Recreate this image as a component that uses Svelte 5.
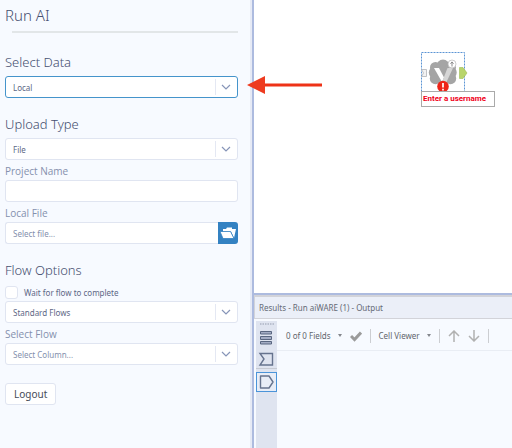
<script>
  let source = $state('Local');
  let uploadType = $state('File');
  let projectName = $state('');
  let file = $state('');
  let wait = $state(false);
  let flowKind = $state('Standard Flows');
  let column = $state('');
</script>

{#snippet chevron()}
  <svg class="chevron" viewBox="0 0 22 20" aria-hidden="true">
    <path d="M.5 2v16" stroke="#e4e8f3" />
    <path d="M7 8l4 4 4-4" fill="none" stroke="#8795b8" stroke-width="1.2" />
  </svg>
{/snippet}

<div class="app">
  <aside class="config">
    <h1>Run AI</h1>
    <hr />

    <section>
      <h2 id="source-title">Select Data</h2>
      <div class="field">
        <select class="active" aria-labelledby="source-title" bind:value={source}>
          <option>Local</option>
        </select>
        {@render chevron()}
      </div>
    </section>

    <section>
      <h2 id="upload-title">Upload Type</h2>
      <div class="field">
        <select aria-labelledby="upload-title" bind:value={uploadType}>
          <option>File</option>
        </select>
        {@render chevron()}
      </div>
      <label class="caption" for="project">Project Name</label>
      <div class="field"><input id="project" type="text" bind:value={projectName} /></div>
      <label class="caption" for="file">Local File</label>
      <div class="field picker">
        <input id="file" type="text" placeholder="Select file..." bind:value={file} />
        <button class="browse" aria-label="Browse files">
          <svg viewBox="0 0 20 22" aria-hidden="true">
            <path d="M5 9.500V7h3l1-1.500h5V7h4l-2 9-3-6.500z" fill="#fff" />
            <path d="M2 9.500h10.500l3.500 7H5z" fill="#fff" stroke="#3482c2" stroke-width=".8" />
          </svg>
        </button>
      </div>
    </section>

    <section>
      <h2 id="flow-title">Flow Options</h2>
      <label class="check"><input type="checkbox" bind:checked={wait} />Wait for flow to complete</label>
      <div class="field">
        <select aria-labelledby="flow-title" bind:value={flowKind}>
          <option>Standard Flows</option>
        </select>
        {@render chevron()}
      </div>
      <label class="caption" for="column">Select Flow</label>
      <div class="field">
        <select id="column" class="empty" bind:value={column}>
          <option value="">Select Column...</option>
        </select>
        {@render chevron()}
      </div>
    </section>

    <button class="logout">Logout</button>
  </aside>

  <main>
    <div class="canvas">
      <svg class="arrow" viewBox="0 0 76 18" aria-hidden="true">
        <path d="M17 9h58" stroke="#ee3217" stroke-width="3" />
        <path d="M0 9L18 0v18z" fill="#ee3b20" />
      </svg>
      <div class="node">
        <svg viewBox="0 0 48 42" aria-hidden="true">
          <rect x=".5" y="1.5" width="43" height="41" fill="none" stroke="#5b94d4" stroke-dasharray="2 1" />
          <path d="M.5 18.500h5v7h-5l2-3.500z" fill="#f2f2f2" stroke="#b0b3b8" stroke-width=".8" />
          <path d="M38.500 16.500h3.500l4 5.500-4 5.500h-3.500z" fill="#b8d56b" stroke="#9dbb55" stroke-width=".6" />
          <g fill="#a5a5a5">
            <rect x="13" y="13" width="18" height="18" />
            <circle cx="22" cy="15" r="6.500" />
            <circle cx="14.500" cy="16.500" r="5.500" /><circle cx="29.500" cy="16.500" r="5.500" />
            <circle cx="13.500" cy="21.500" r="5.700" /><circle cx="30" cy="21.500" r="5.700" />
            <circle cx="14.500" cy="27.500" r="5.700" /><circle cx="29.500" cy="27.500" r="5.700" />
            <circle cx="22" cy="28" r="6.500" />
          </g>
          <path d="M13 17h5l5 9.500-2 4.500z" fill="#fff" />
          <path d="M21 31l5.500-14H32l-6.500 14z" fill="#d6d6d6" />
          <circle cx="31" cy="13" r="4" fill="#fff" stroke="#b7b7b7" stroke-width=".7" />
          <path d="M31 15.500V11M29.500 12.700l1.500-1.800 1.500 1.800" fill="none" stroke="#8b8b8b" />
          <circle cx="22" cy="35.500" r="5.800" fill="#ee2418" />
          <path d="M22 32v4.500M22 37.800v1.700" stroke="#fff" stroke-width="1.700" />
        </svg>
        <div class="error">Enter a username</div>
      </div>
    </div>

    <section class="results">
      <header>Results - Run aiWARE (1) - Output</header>
      <div class="body">
        <nav aria-label="Result views">
          <svg class="grip" viewBox="0 0 14 2" aria-hidden="true">
            <path d="M0 1h14" stroke="#949cae" stroke-dasharray="1.5 1" />
          </svg>
          <button aria-label="Messages">
            <svg viewBox="0 0 20 20" aria-hidden="true">
              <path d="M4.500 3.500h11v2.500h-11zM4.500 8.500h11v3h-11zM4.500 13.500h11v2.500h-11z" fill="#a3acc4" stroke="#596680" />
            </svg>
          </button>
          <button aria-label="Input">
            <svg viewBox="0 0 20 20" aria-hidden="true">
              <path d="M4 4.500h12.500v11.500H4L8 10z" fill="none" stroke="#66738e" stroke-width="1.400" />
            </svg>
          </button>
          <button class="current" aria-label="Output">
            <svg viewBox="0 0 19 18" aria-hidden="true">
              <path d="M3.500 3h8.500l4 6-4 6H3.500z" fill="none" stroke="#66738e" stroke-width="1.400" stroke-linejoin="round" />
            </svg>
          </button>
        </nav>
        <div class="output">
          <div class="toolbar">
            <button>0 of 0 Fields <i></i></button>
            <button aria-label="Apply">
              <svg viewBox="0 0 12 12" aria-hidden="true"><path d="M1 6l3.500 3.500L11 2.500" fill="none" stroke="#9b9b9b" stroke-width="3" /></svg>
            </button>
            <span class="bar"></span>
            <button>Cell Viewer <i></i></button>
            <span class="bar"></span>
            <button aria-label="Previous">
              <svg viewBox="0 0 12 12" aria-hidden="true"><path d="M6 12V1M1 6l5-5 5 5" fill="none" stroke="#b1b1b1" stroke-width="1.500" /></svg>
            </button>
            <button aria-label="Next">
              <svg viewBox="0 0 12 12" aria-hidden="true"><path d="M6 0v11M1 6l5 5 5-5" fill="none" stroke="#b1b1b1" stroke-width="1.500" /></svg>
            </button>
            <span class="bar"></span>
          </div>
        </div>
      </div>
    </section>
  </main>
</div>

<style>
  :global(body) { margin: 0; }
  .app {
    display: flex;
    min-height: 100vh;
    font-family: "Noto Sans", "Open Sans", sans-serif;
    font-size: 8px;
    color: #5d6785;
    background: #f7faff;
  }
  .app * { box-sizing: border-box; }
  button, input, select { font: inherit; color: inherit; margin: 0; }
  svg { display: block; }

  .config {
    flex: 0 0 254px;
    padding: 5px 14px 0 5px;
    border-right: 2px solid #adbbdf;
    box-shadow: inset -2px 0 #e6eaf5;
  }
  h1, h2 {
    margin: 0;
    font-size: 13px;
    line-height: 20px;
    font-weight: 300;
    color: #465070;
  }
  h1 { font-size: 15px; }
  h2 { margin-bottom: 4px; }
  hr { margin: 6px 0 19px 7px; border: 0; height: 2px; background: #e2e6e8; }
  section { margin-bottom: 16px; }
  .field { position: relative; }
  .field select, .field input {
    display: block;
    width: 100%;
    height: 22px;
    padding: 0 24px 0 7px;
    border: 1px solid #e0e5f1;
    border-radius: 3px;
    background: #fff;
    appearance: none;
    outline: 0;
  }
  .field .active { border-color: #4594cb; }
  .field .empty, ::placeholder { color: #8490ad; opacity: 1; }
  .chevron {
    position: absolute;
    top: 1px;
    right: 1px;
    width: 22px;
    height: 20px;
    pointer-events: none;
  }
  .caption {
    display: block;
    font-family: "Open Sans", "Noto Sans", sans-serif;
    font-size: 10px;
    line-height: 14px;
    padding: 4px 0 2px;
    color: #8490ad;
  }
  .picker { display: flex; }
  .picker input { flex: 1; min-width: 0; width: 0; border-radius: 3px 0 0 3px; border-right: 0; }
  .browse { width: 20px; height: 22px; padding: 0; border: 0; border-radius: 0 3px 3px 0; background: #3482c2; }
  .check { display: flex; align-items: center; gap: 6px; height: 13px; margin-bottom: 2px; }
  .check input { appearance: none; width: 13px; height: 13px; border: 1px solid #e0e5f1; border-radius: 3px; background: #fff; }
  h2 + .check { margin-top: 6px; }
  .logout {
    height: 22px;
    padding: 0 8px;
    border: 1px solid #e0e5f1;
    border-radius: 3px;
    background: #fff;
    font-size: 10px;
    color: #454b58;
    margin-top: 2px;
  }

  main { flex: 1; min-width: 0; display: flex; flex-direction: column; }
  .canvas { position: relative; flex: 1; background: #fff; }
  .arrow { position: absolute; left: -7px; top: 76px; width: 76px; height: 18px; }
  .node { position: absolute; left: 167px; top: 51px; }
  .node svg { width: 48px; height: 42px; }
  .error {
    position: absolute;
    top: 40px;
    left: 0;
    padding: 0 8px 0 1px;
    border: 1px solid #aaa;
    background: #fff;
    color: #f00018;
    font-family: Roboto, sans-serif;
    font-size: 8px;
    line-height: 14px;
    font-weight: 700;
    white-space: nowrap;
  }

  .results {
    display: flex;
    flex-direction: column;
    flex: 0 0 155px;
    margin: 0;
    border-top: 2px solid #adbbdf;
  }
  header {
    padding-left: 4px;
    border: 1px solid #d2d3d9;
    border-width: 2px 0 1px 1px;
    line-height: 21px;
    background: #ebeff8;
    color: #656a76;
  }
  .body { flex: 1; display: flex; padding: 2px 0 0 2px; }
  nav {
    flex: 0 0 21px;
    display: flex;
    flex-direction: column;
    align-items: center;
    padding-top: 2px;
    background: #dfe4f0;
  }
  .grip { width: 14px; height: 2px; margin-bottom: 2px; }
  nav button { width: 21px; height: 21px; padding: 0; border: 0; background: none; }
  nav svg:not(.grip) { width: 20px; height: 20px; }
  nav .current { height: 20px; border: 1px solid #4b94d9; margin-top: 3px; background: #e8edf7; box-shadow: 0 -3px #dfe4f0, 0 -4px #c6cad3; }
  nav .current svg { width: 19px; height: 18px; }
  .output { flex: 1; min-width: 0; }
  .toolbar {
    display: flex;
    align-items: center;
    gap: 8px;
    height: 30px;
    padding-left: 9px;
    border-bottom: 1px solid #e9edf4;
    color: #62656c;
  }
  .toolbar button { display: flex; align-items: center; gap: 7px; padding: 0; border: 0; background: none; white-space: nowrap; }
  .toolbar svg { width: 12px; height: 12px; }
  .toolbar i { border: 2px solid transparent; border-top: 3px solid #83868c; border-bottom: 0; }
  .bar { width: 1px; height: 14px; background: #ccced2; }
</style>
